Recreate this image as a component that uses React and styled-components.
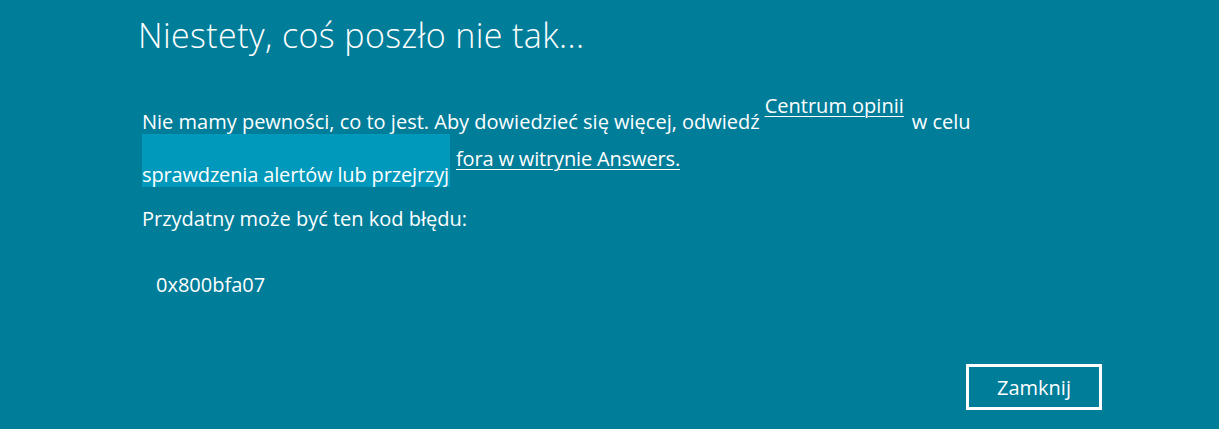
import React from "react";
import styled, { createGlobalStyle } from "styled-components";

const Global = createGlobalStyle`
  html, body { margin: 0; padding: 0; background: #007d99; }
  body { font-family: "Open Sans", "Noto Sans", sans-serif; color: #ffffff; }
`;

const Page = styled.div`
  box-sizing: border-box;
  height: 429px;
  display: flex;
  flex-direction: column;
  padding: 15px 0 19px 138px;
  background: #007d99;
  color: #fff;
`;

const Title = styled.h1`
  margin: 0 0 39px 0;
  font-weight: 300;
  font-size: 34px;
  line-height: 40px;
  letter-spacing: 0.4px;
`;

const Body = styled.div`
  margin-left: 4px;
  font-size: 20px;
  line-height: 24px;
`;

const Row = styled.div`
  display: flex;
  align-items: ${(p) => (p.$bottom ? "flex-end" : "flex-start")};
  margin-top: ${(p) => p.$top || 0}px;
  white-space: nowrap;
  letter-spacing: ${(p) => (p.$tight ? "-0.15px" : "0")};
`;

const Text = styled.span`
  margin-left: ${(p) => p.$left || 0}px;
`;

const Link = styled.a`
  color: #fff;
  text-decoration: underline;
  text-decoration-thickness: 1px;
  text-underline-offset: 3px;
  margin-left: ${(p) => p.$left || 0}px;
  margin-bottom: ${(p) => p.$raise || 0}px;
  margin-top: ${(p) => p.$drop || 0}px;
  cursor: pointer;
`;

const Selected = styled.span`
  background: #0099bb;
  padding: 29px 1px 0 0;
`;

const Code = styled.div`
  margin-top: 42px;
  padding-left: 14px;
`;

const Footer = styled.div`
  margin-top: auto;
  display: flex;
  justify-content: flex-end;
  padding-right: 117px;
`;

const Button = styled.button`
  box-sizing: border-box;
  width: 136px;
  height: 46px;
  background: transparent;
  border: 3px solid #fff;
  color: #fff;
  font-family: "Open Sans", "Noto Sans", sans-serif;
  font-size: 20px;
  padding: 0;
  cursor: pointer;
`;

export default function App() {
  return (
    <>
      <Global />
      <Page>
        <Title>Niestety, coś poszło nie tak...</Title>
        <Body>
          <Row $bottom>
            <Text>Nie mamy pewności, co to jest. Aby dowiedzieć się więcej, odwiedź</Text>
            <Link $left={5} $raise={16}>Centrum opinii</Link>
            <Text $left={8}>w celu</Text>
          </Row>
          <Row $tight>
            <Selected>sprawdzenia alertów lub przejrzyj</Selected>
            <Link $left={6} $drop={13}>fora w witrynie Answers.</Link>
          </Row>
          <Row $top={20}>
            <Text>Przydatny może być ten kod błędu:</Text>
          </Row>
          <Code>0x800bfa07</Code>
        </Body>
        <Footer>
          <Button>Zamknij</Button>
        </Footer>
      </Page>
    </>
  );
}
